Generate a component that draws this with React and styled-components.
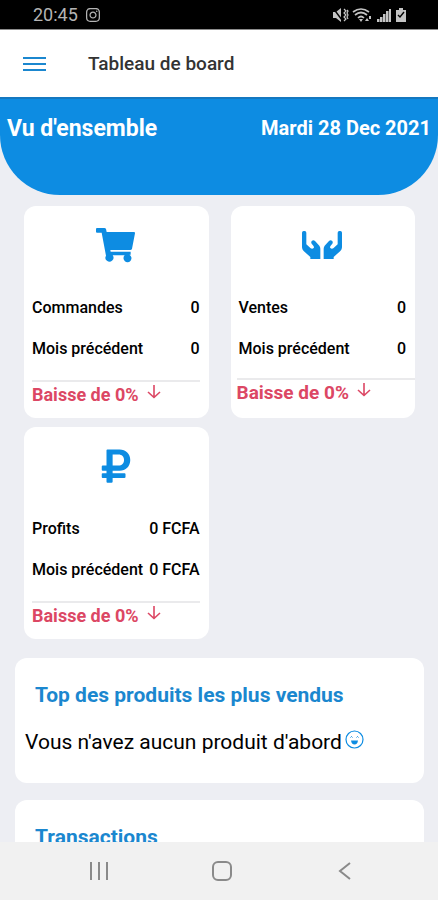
import * as React from 'react';
import styled, { createGlobalStyle } from 'styled-components';
import { FaRubleSign, FaInstagram } from 'react-icons/fa';

const BLUE = '#0d8ce2';

const stats = [
  { icon: 'cart', label: 'Commandes', value: '0', previous: '0' },
  { icon: 'hands', label: 'Ventes', value: '0', previous: '0', wide: true },
  { icon: 'ruble', label: 'Profits', value: '0 FCFA', previous: '0 FCFA' }
];

const CartIcon = () => (
  <svg width="39" height="35" viewBox="0 0 117 105" fill="currentColor" aria-hidden="true">
    <path d="M3 0H25Q29 0 30 3L32 12H114Q118 12 117 16L108 62Q107 66 103 66H43L44 71H104V80H100A12 12 0 1 1 86 82H50A12 12 0 1 1 30 83L17 14H3Q0 14 0 11V3Q0 0 3 0Z" />
  </svg>
);

const HandsIcon = () => (
  <svg width="40" height="28" viewBox="0 0 120 84" fill="currentColor" aria-hidden="true">
    <path id="hand" d="M0 5Q0 0 5 0H8Q13 0 13 5V40L26 52Q31 55 35 51Q37 48 34 44L29 38Q26 33 30 29Q35 26 39 30L52 44Q55 48 55 53V84H25V78L5 60Q0 55 0 49Z" />
    <use href="#hand" transform="matrix(-1 0 0 1 120 0)" />
  </svg>
);

const SmileIcon = () => (
  <svg width="19" height="19" viewBox="0 0 19 19" fill="none" stroke={BLUE} aria-hidden="true">
    <circle cx="9.5" cy="9.5" r="8.5" strokeWidth="1.2" />
    <path d="M5.5 7.5l1-1 1 1M11.5 7.5l1-1 1 1" />
    <path d="M6 10.5H13Q12.5 14.5 9.5 14.5T6 10.5Z" fill={BLUE} stroke="none" />
  </svg>
);

const ArrowIcon = () => (
  <svg width="14" height="15" viewBox="0 0 14 15" fill="none" stroke="currentColor" strokeWidth="1.6" aria-hidden="true">
    <path d="M7 0V12.5M1 7L7 12.5L13 7" />
  </svg>
);

const StatusIcons = () => (
  <svg width="76" height="16" viewBox="0 0 76 16" fill="#c4c4c4" aria-hidden="true">
    <path d="M1 5H4L9 1V15L4 11H1Z" />
    <path d="M1 1L10 13" stroke="#000" strokeWidth="1.4" />
    <path d="M12 2l2 2-2 2 2 2-2 2 2 2-2 2M15 3l1 1-1 2 1 2-1 2 1 2" fill="none" stroke="#c4c4c4" strokeWidth="1.2" />
    <path d="M21 5Q29-1 37 5M23 8Q29 3 35 8M26 11Q29 8 32 11" fill="none" stroke="#c4c4c4" strokeWidth="1.7" />
    <path d="M27 12H31L29 15ZM33 14L35 11L37 14ZM37 9H39V12H37Z" />
    <path d="M45 12H47.5V15H45ZM48 10H50.500V15H48ZM51 7H53.500V15H51ZM54 4H56.500V15H54ZM57 2H59V15H57Z" />
    <path d="M67 1H71V3H74V15H64V3H67Z" />
    <path d="M66 8L68 10L72 5" fill="none" stroke="#000" strokeWidth="1.4" />
  </svg>
);

const icons = {
  cart: <CartIcon />,
  hands: <HandsIcon />,
  ruble: <FaRubleSign size={38} />
};

const StatCard = ({ icon, label, value, previous, wide }) => (
  <Card>
    <IconBox>{icons[icon]}</IconBox>
    <StatRow><span>{label}</span><span>{value}</span></StatRow>
    <StatRow><span>Mois précédent</span><span>{previous}</span></StatRow>
    <Trend $wide={wide}>
      <span>Baisse de 0%</span>
      <ArrowIcon />
    </Trend>
  </Card>
);

class App extends React.Component {
  render() {
    return (
      <Screen>
        <GlobalStyle />
        <StatusBar>
          <Clock>20:45 <FaInstagram size={16} /></Clock>
          <StatusIcons />
        </StatusBar>
        <Header>
          <MenuButton type="button" aria-label="Menu">
            <span /><span /><span />
          </MenuButton>
          <Title>Tableau de board</Title>
        </Header>
        <Content>
          <Hero>
            <HeroTitle>Vu d'ensemble</HeroTitle>
            <HeroDate>Mardi 28 Dec 2021</HeroDate>
          </Hero>
          <Cards>
            {stats.map((stat) => <StatCard key={stat.label} {...stat} />)}
          </Cards>
          <Panel>
            <PanelTitle>Top des produits les plus vendus</PanelTitle>
            <PanelText>
              Vous n'avez aucun produit d'abord <SmileIcon />
            </PanelText>
          </Panel>
          <Panel>
            <PanelTitle>Transactions</PanelTitle>
          </Panel>
        </Content>
        <NavBar>
          <NavButton type="button" aria-label="Applications">
            <svg width="20" height="20" viewBox="0 0 20 20"><path d="M2 1V19M10 1V19M18 1V19" /></svg>
          </NavButton>
          <NavButton type="button" aria-label="Accueil">
            <svg width="20" height="20" viewBox="0 0 20 20"><rect x="1" y="1" width="18" height="18" rx="5" /></svg>
          </NavButton>
          <NavButton type="button" aria-label="Retour">
            <svg width="20" height="20" viewBox="0 0 20 20"><path d="M15 2L5 10L15 18" /></svg>
          </NavButton>
        </NavBar>
      </Screen>
    );
  }
}

const GlobalStyle = createGlobalStyle`
  * {
    box-sizing: border-box;
  }
  body {
    margin: 0;
    font-family: Roboto, sans-serif;
    color: #000;
  }
`;

const Screen = styled.div`
  display: flex;
  flex-direction: column;
  height: 100vh;
  background: #edeef3;
`;

const StatusBar = styled.div`
  display: flex;
  align-items: center;
  justify-content: space-between;
  flex: none;
  height: 30px;
  padding: 0 30px 0 33px;
  background: #000;
  border-bottom: 1px solid #8c8c8c;
`;

const Clock = styled.div`
  display: flex;
  align-items: center;
  gap: 7px;
  font-size: 18px;
  color: #b4b4b4;
`;

const Header = styled.header`
  display: flex;
  align-items: center;
  flex: none;
  gap: 42px;
  height: 67px;
  padding: 0 23px;
  background: #fff;
`;

const MenuButton = styled.button`
  display: flex;
  flex-direction: column;
  gap: 4px;
  width: 23px;
  padding: 0;
  border: 0;
  background: none;

  span {
    height: 2px;
    background: #1b87cf;
  }
`;

const Title = styled.h1`
  margin: 0;
  font-size: 19px;
  font-weight: 500;
  color: #333;
`;

const Content = styled.main`
  flex: 1;
  min-height: 0;
  overflow: hidden;
`;

const Hero = styled.section`
  display: flex;
  align-items: flex-start;
  justify-content: space-between;
  height: 98px;
  padding: 17px 7px;
  border-top: 2px solid #1478c0;
  border-radius: 0 0 60px 60px;
  background: ${BLUE};
  color: #fff;
`;

const HeroTitle = styled.h2`
  margin: 0;
  font-size: 23px;
  line-height: 26px;
  font-weight: 700;
`;

const HeroDate = styled.span`
  font-size: 20px;
  line-height: 24px;
  font-weight: 700;
`;

const Cards = styled.section`
  display: grid;
  grid-template-columns: 1fr 1fr;
  gap: 9px 22px;
  padding: 11px 23px 0 24px;
`;

const Card = styled.article`
  height: 212px;
  padding: 19px 9px 0 8px;
  border-radius: 12px;
  background: #fff;
`;

const IconBox = styled.div`
  display: flex;
  align-items: center;
  justify-content: center;
  height: 40px;
  margin-bottom: 22px;
  color: ${BLUE};
`;

const StatRow = styled.div`
  display: flex;
  align-items: center;
  justify-content: space-between;
  height: 41px;
  font-size: 16px;
  font-weight: 500;
  white-space: nowrap;
`;

const Trend = styled.div`
  display: flex;
  align-items: flex-start;
  gap: 8px;
  margin: ${(props) => (props.$wide ? '9px -9px 0 -2px' : '11px 0 0')};
  padding-top: 3px;
  border-top: 2px solid #eaeaec;
  font-size: ${(props) => (props.$wide ? '19px' : '18px')};
  line-height: 20px;
  font-weight: 700;
  color: #dc4764;
`;

const Panel = styled.section`
  height: 125px;
  margin: 19px 14px 0 15px;
  padding: 24px 10px;
  border-radius: 12px;
  background: #fff;

  & + & {
    margin-top: 17px;
  }
`;

const PanelTitle = styled.h2`
  margin: 0 10px 22px;
  font-size: 21px;
  line-height: 26px;
  font-weight: 700;
  color: #1b87cf;
`;

const PanelText = styled.p`
  display: flex;
  align-items: flex-start;
  gap: 3px;
  margin: 0;
  font-size: 21px;
  line-height: 24px;
  white-space: nowrap;
`;

const NavBar = styled.nav`
  display: flex;
  align-items: center;
  justify-content: space-around;
  flex: none;
  height: 58px;
  padding: 0 32px 0 38px;
  background: #f1f1f1;
`;

const NavButton = styled.button`
  display: flex;
  padding: 0;
  border: 0;
  background: none;

  svg {
    fill: none;
    stroke: #8a8a8a;
    stroke-width: 2;
  }
`;

export default App;
